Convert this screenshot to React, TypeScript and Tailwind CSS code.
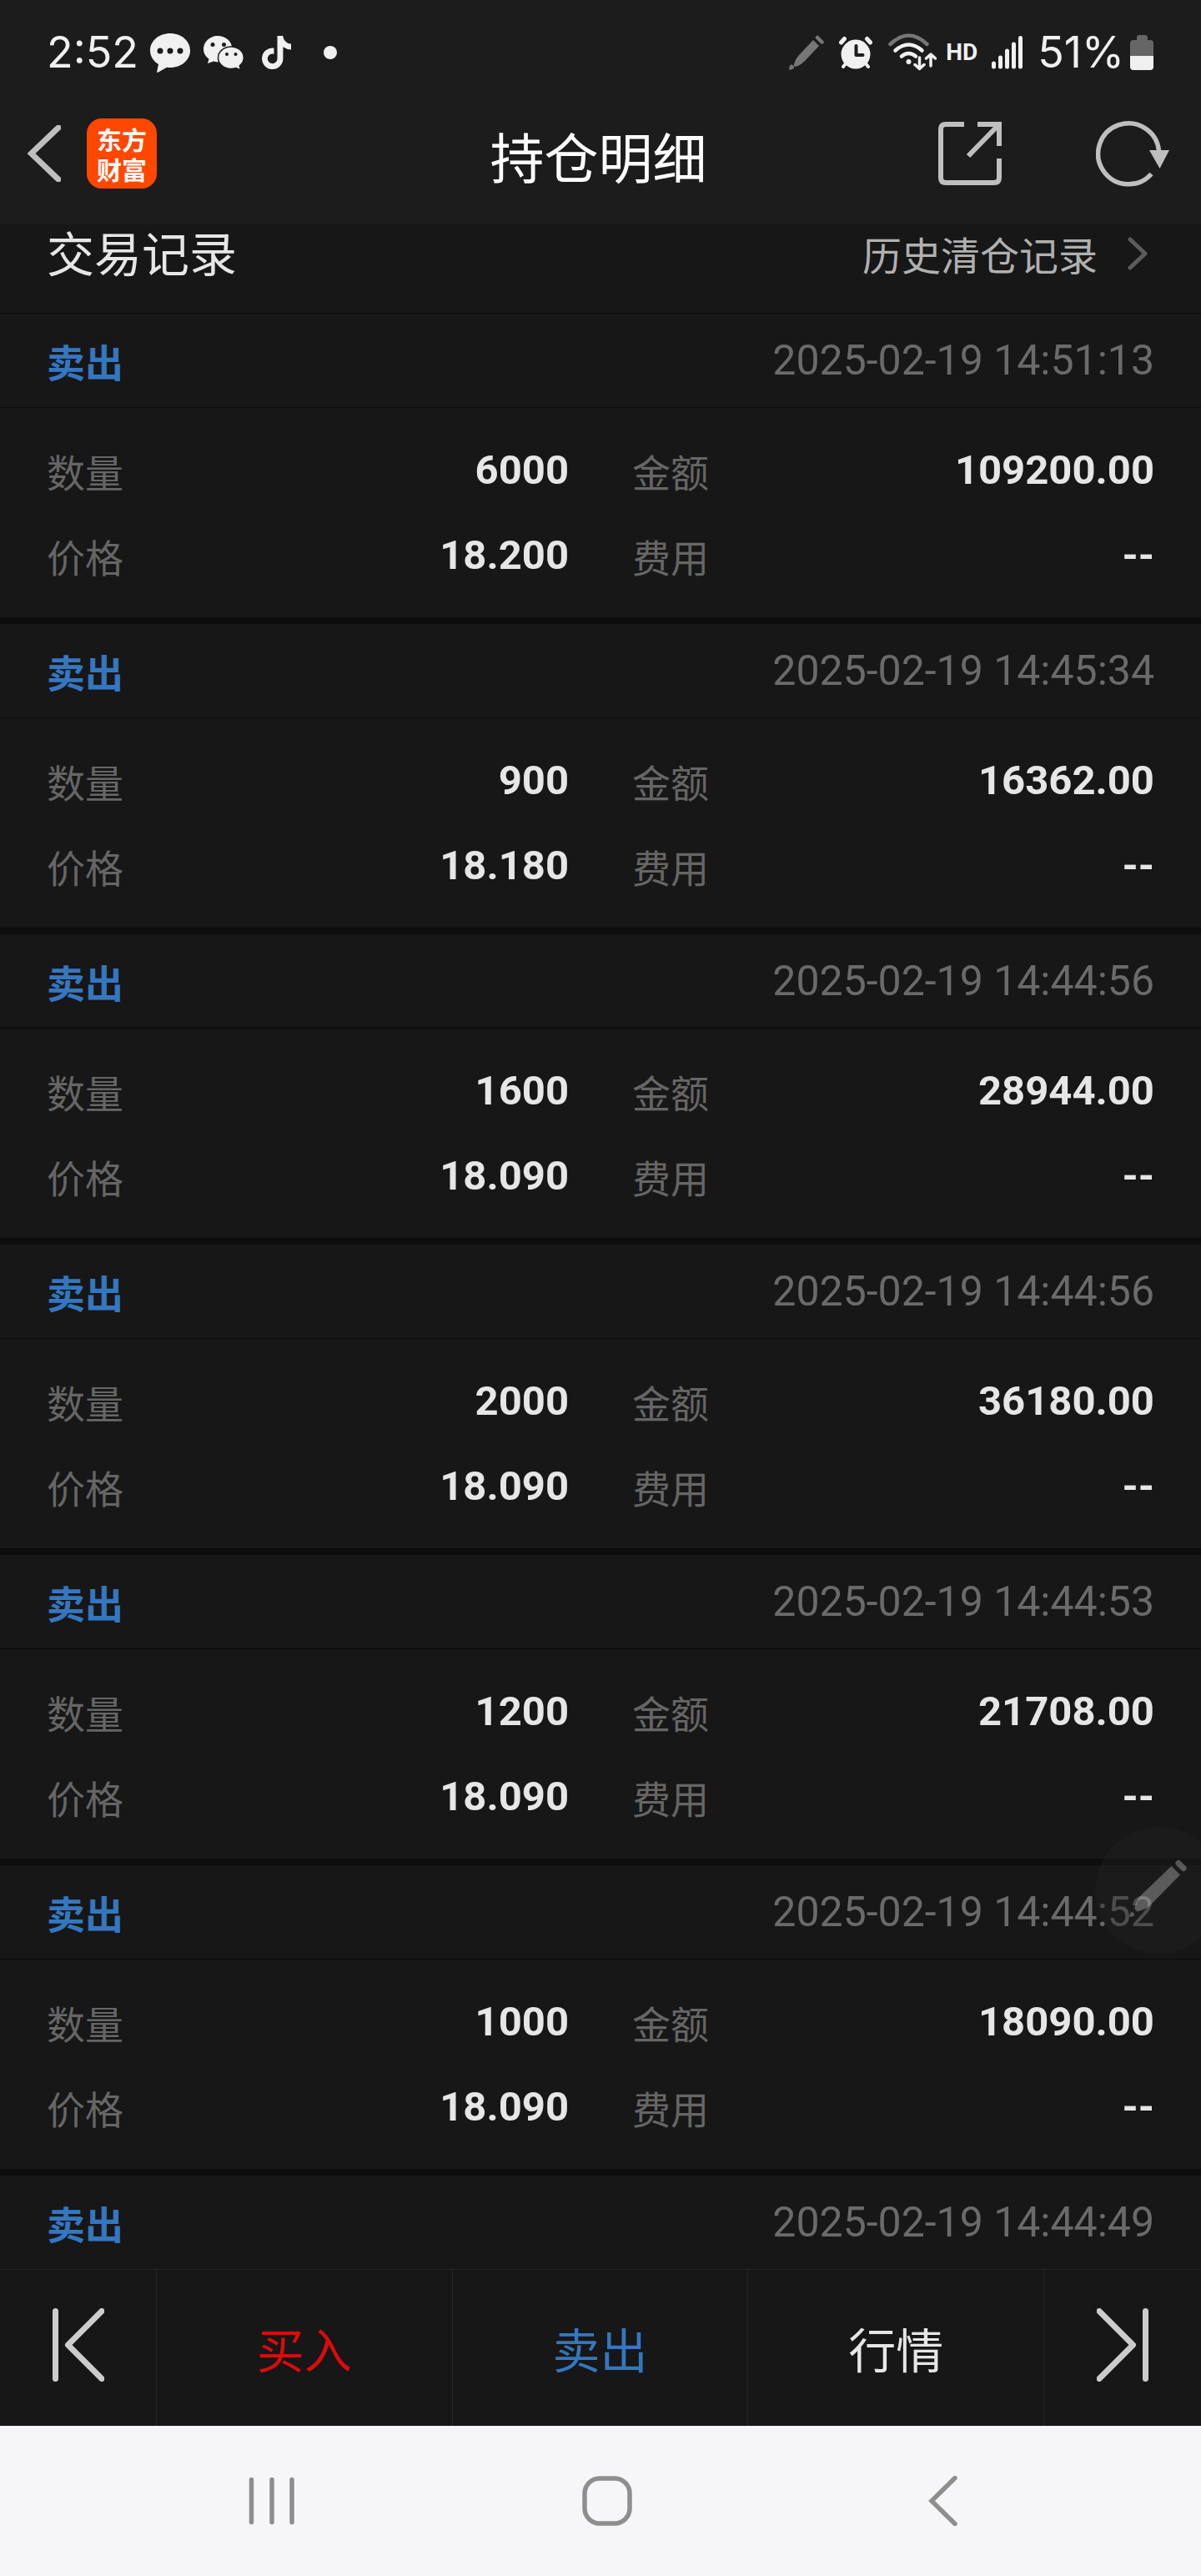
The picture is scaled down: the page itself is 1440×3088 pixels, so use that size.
import { useState } from 'react';
import { FaTiktok } from 'react-icons/fa';

const cjk = "font-['Noto_Sans_CJK_SC',sans-serif]";

const trades = [
  { id: 1, side: '卖出', time: '2025-02-19 14:51:13', qty: '6000', price: '18.200', amount: '109200.00', fee: '--' },
  { id: 2, side: '卖出', time: '2025-02-19 14:45:34', qty: '900', price: '18.180', amount: '16362.00', fee: '--' },
  { id: 3, side: '卖出', time: '2025-02-19 14:44:56', qty: '1600', price: '18.090', amount: '28944.00', fee: '--' },
  { id: 4, side: '卖出', time: '2025-02-19 14:44:56', qty: '2000', price: '18.090', amount: '36180.00', fee: '--' },
  { id: 5, side: '卖出', time: '2025-02-19 14:44:53', qty: '1200', price: '18.090', amount: '21708.00', fee: '--' },
  { id: 6, side: '卖出', time: '2025-02-19 14:44:52', qty: '1000', price: '18.090', amount: '18090.00', fee: '--' },
];

function StatusBar() {
  return (
    <div className="flex h-[126px] items-center justify-between pr-[57px] pl-[56px] text-[#f0f0f0]">
      <div className="flex items-center">
        <span className="w-[124px] font-['Inter',sans-serif] text-[52px]">2:52</span>
        <svg viewBox="0 0 48 47" className="h-[47px] w-[48px]" aria-hidden="true">
          <path fill="currentColor" d="M24 0c13.500 0 24 9 24 20.500S37.500 41 24 41q-2 0-4-.3L9 47q-1 0-.8-1.200L10 37C4 33.500 0 27.500 0 20.500 0 9 10.500 0 24 0z" />
          <g fill="#1c1c1c"><circle cx="12" cy="21" r="3.500" /><circle cx="24" cy="21" r="3.500" /><circle cx="36" cy="21" r="3.500" /></g>
        </svg>
        <svg viewBox="0 0 48 41" className="ml-4 h-[41px] w-[48px]" aria-hidden="true">
          <path fill="currentColor" d="M17 0c9.500 0 17 6.500 17 14.500v1L17 31.500l-5-1L5 33l1.500-5.500C2.500 25 0 20.500 0 16 0 7 7.500 0 17 0z" />
          <path fill="currentColor" stroke="#1c1c1c" strokeWidth="1.500" d="M33 13c8.500 0 15.300 5.800 15.300 13 0 4-2 7.500-5 9.800L44.500 41 39 38.500q-3 1-6 1c-8.500 0-15.500-6-15.500-13.300S24.500 13 33 13z" />
          <g fill="#1c1c1c"><circle cx="11" cy="10.500" r="2.500" /><circle cx="24.500" cy="10.500" r="2.500" /><circle cx="28" cy="22" r="2" /><circle cx="38.500" cy="22" r="2" /></g>
        </svg>
        <FaTiktok className="ml-[22px] h-[40px] w-[35px]" />
        <span className="ml-[39px] size-4 rounded-full bg-[#f0f0f0]" />
      </div>
      <div className="flex items-center">
        <svg viewBox="0 0 42 42" className="size-[42px] text-[#777]" fill="currentColor" aria-hidden="true">
          <path d="M29 6l7 7-17 18q-6 6-12 7-2-1-1-3 2-7 7-12z" />
          <path d="M0 40.500l1-4q2-2 4 0t0 4l-4 1.500z" />
          <path d="M34 3l5.500 5.500" stroke="currentColor" strokeWidth="4.500" strokeLinecap="round" />
        </svg>
        <svg viewBox="0 0 40 40" className="ml-[18px] size-[40px]" aria-hidden="true">
          <g stroke="currentColor" strokeWidth="5" strokeLinecap="round">
            <path d="M2.500 8l4-4.500M37.500 8l-4-4.500" />
            <path d="M9 32l-4 5M31 32l4 5" strokeWidth="4" />
          </g>
          <circle cx="20" cy="22" r="17.500" fill="currentColor" />
          <path d="M20.500 12v11h8" fill="none" stroke="#1c1c1c" strokeWidth="4" strokeLinecap="round" strokeLinejoin="round" />
        </svg>
        <svg viewBox="0 0 58 46" className="ml-[19px] h-[46px] w-[58px]" fill="none" stroke="currentColor" strokeWidth="4.500" strokeLinecap="round" strokeLinejoin="round" aria-hidden="true">
          <path d="M2.500 13q22-21 44 0" stroke="#777" />
          <path d="M8.500 20.500q16-14 32 0M16 27.500q8.500-7 17 0" />
          <circle cx="24.500" cy="34" r="3" fill="currentColor" stroke="none" />
          <path d="M37.500 29v13M32 37.500l5.500 5 5.500-5M51 39V26M45.500 30l5.500-5 5.500 5" strokeWidth="3.500" />
        </svg>
        <span className="ml-[11px] text-[28px] font-bold">HD</span>
        <svg viewBox="0 0 37 40" className="ml-[17px] h-[40px] w-[37px]" stroke="currentColor" strokeWidth="5" strokeLinecap="round" aria-hidden="true">
          <path d="M2.500 33v4M10.500 26v11M18.500 18v19M26.500 10v27M34.500 2.500V37" />
        </svg>
        <span className="ml-[18px] font-['Inter',sans-serif] text-[52px]">51%</span>
        <svg viewBox="0 0 28 42" className="ml-[7px] h-[42px] w-[28px]" aria-hidden="true">
          <path fill="#666" d="M8 3q0-3 3-3h7q3 0 3 3v3h3q4 0 4 4v16H0V10q0-4 4-4h4z" />
          <path fill="currentColor" d="M0 25h28v13q0 4-4 4H4q-4 0-4-4z" />
        </svg>
      </div>
    </div>
  );
}

function TitleBar() {
  return (
    <div className="grid h-[143px] grid-cols-[1fr_auto_1fr] items-center pr-[38px] pb-[27px] pl-[33px] text-[#bfbfbf]">
      <div className="flex items-center gap-[31px]">
        <button type="button" aria-label="返回">
          <svg viewBox="0 0 40 68" className="h-[68px] w-[40px]" fill="none" stroke="currentColor" strokeWidth="7">
            <path d="M37 3L4.500 34 37 65" strokeLinecap="round" />
          </svg>
        </button>
        <div className={`${cjk} flex size-[84px] items-center justify-center rounded-[18px] bg-[#ff4700] text-[30px] leading-[36px] font-bold text-white`}>
          <span className="w-[60px]">东方财富</span>
        </div>
      </div>
      <h1 className={`${cjk} pt-1 text-[65px] text-white`}>持仓明细</h1>
      <div className="flex items-center justify-end gap-[113px]">
        <button type="button" aria-label="分享">
          <svg viewBox="0 0 76 76" className="size-[76px]" fill="none" stroke="currentColor" strokeWidth="6">
            <path d="M31 3H9q-6 0-6 6v58q0 6 6 6h58q6 0 6-6V44" />
            <path d="M47 3h26v26M72 4L36 41" />
          </svg>
        </button>
        <button type="button" aria-label="刷新">
          <svg viewBox="0 0 88 80" className="h-[80px] w-[88px]" fill="none">
            <path d="M75.500 37A36.500 36.500 0 1 0 66.500 64.500" stroke="currentColor" strokeWidth="5.500" />
            <path d="M64 36h24L76.500 58z" fill="currentColor" />
          </svg>
        </button>
      </div>
    </div>
  );
}

function Field({ label, value }: { label: string; value: string }) {
  return (
    <div className="flex h-[102px] items-center justify-between">
      <dt className={`${cjk} pt-0.5 text-[46px] text-[#666]`}>{label}</dt>
      <dd className="text-[49px] font-bold text-[#e6e6e6]">{value}</dd>
    </div>
  );
}

function TradeHead({ side, time }: { side: string; time: string }) {
  return (
    <div className="flex h-[112px] items-center justify-between px-14">
      <span className={`${cjk} text-[46px] font-bold text-[#3477c0]`}>{side}</span>
      <time className="text-[50px] text-[#6a6a6a]">{time}</time>
    </div>
  );
}

function StepIcon({ flip }: { flip?: boolean }) {
  return (
    <svg viewBox="0 0 62 88" className={flip ? 'h-[88px] w-[62px] rotate-180' : 'h-[88px] w-[62px]'} fill="none" stroke="#ccc" strokeWidth="7" strokeLinecap="round" strokeLinejoin="round">
      <path d="M3.500 3.500v81M59 3.500L18.500 44 59 84.500" />
    </svg>
  );
}

export default function App() {
  const [items] = useState(trades);

  return (
    <div className="relative flex min-h-screen flex-col overflow-hidden bg-[#171717] font-['Roboto',sans-serif] leading-none">
      <header className="bg-[#1c1c1c]">
        <StatusBar />
        <TitleBar />
      </header>

      <main className="flex-1">
        <div className={`${cjk} flex h-[107px] items-center justify-between border-b border-[#0b0b0b] px-14 pb-[41px]`}>
          <h2 className="text-[57px] text-[#e6e6e6]">交易记录</h2>
          <a href="#history" className="flex items-center gap-[36px] pt-1 pr-2 text-[47px] text-[#b0b0b0]">
            历史清仓记录
            <svg viewBox="0 0 24 40" className="h-[40px] w-[24px]" fill="none" stroke="#5c5c5c" strokeWidth="5" strokeLinecap="round" strokeLinejoin="round" aria-hidden="true">
              <path d="M3 3l18 17L3 37" />
            </svg>
          </a>
        </div>

        {items.map(t => (
          <section key={t.id} className="border-b-8 border-[#0d0d0d]">
            <TradeHead side={t.side} time={t.time} />
            <dl className="grid grid-cols-2 gap-x-[76px] border-t border-[#0b0b0b] px-14 pt-[23px] pb-[24px]">
              <Field label="数量" value={t.qty} />
              <Field label="金额" value={t.amount} />
              <Field label="价格" value={t.price} />
              <Field label="费用" value={t.fee} />
            </dl>
          </section>
        ))}
        <TradeHead side="卖出" time="2025-02-19 14:44:49" />
      </main>

      <div className={`${cjk} flex h-[188px] divide-x divide-[#262626] border-t border-[#262626] text-[57px]`}>
        <button type="button" aria-label="上一个" className="flex w-[188px] items-center justify-center pb-2"><StepIcon /></button>
        <button type="button" className="flex-1 text-[#dc0b0b]">买入</button>
        <button type="button" className="flex-1 text-[#3477c0]">卖出</button>
        <button type="button" className="flex-1 text-[#e6e6e6]">行情</button>
        <button type="button" aria-label="下一个" className="flex w-[188px] items-center justify-center pb-2"><StepIcon flip /></button>
      </div>

      <nav className="flex h-[180px] items-center justify-between bg-[#f6f6f8] pr-[280px] pl-[296px]">
        <button type="button" aria-label="最近任务">
          <svg viewBox="0 0 60 60" className="size-[60px]" stroke="#8e8e8e" strokeWidth="5.500" strokeLinecap="round"><path d="M5.500 4.500v51M30 4.500v51M54 4.500v51" /></svg>
        </button>
        <button type="button" aria-label="主屏幕">
          <svg viewBox="0 0 60 60" className="size-[60px]" fill="none" stroke="#8e8e8e" strokeWidth="5.500"><rect x="3" y="3" width="54" height="54" rx="18" /></svg>
        </button>
        <button type="button" aria-label="系统返回">
          <svg viewBox="0 0 60 60" className="size-[60px]" fill="none" stroke="#8e8e8e" strokeWidth="5.500" strokeLinecap="round"><path d="M45 2.500L17 30l28 27.500" /></svg>
        </button>
      </nav>

      {/* floating pen, half tucked behind the right edge */}
      <button type="button" aria-label="手写笔" className="absolute -right-[25px] bottom-[746px] flex size-[152px] items-center justify-center rounded-full bg-[#242424]/40 pb-1">
        <svg viewBox="0 0 70 70" className="size-[70px] text-white/28" fill="currentColor" aria-hidden="true">
          <path d="M50.500 8L61 18.500 25 55q-6 5.500-15 7.500-4-2-3.500-5.500Q9 48 14 43z" />
          <path d="M0 68.500l1.500-4.500q1.500-2 3.500 0t1 3.500l-4.500 1.500z" />
          <path d="M59 4.500l6 6" stroke="currentColor" strokeWidth="7" strokeLinecap="round" />
        </svg>
      </button>
    </div>
  );
}
